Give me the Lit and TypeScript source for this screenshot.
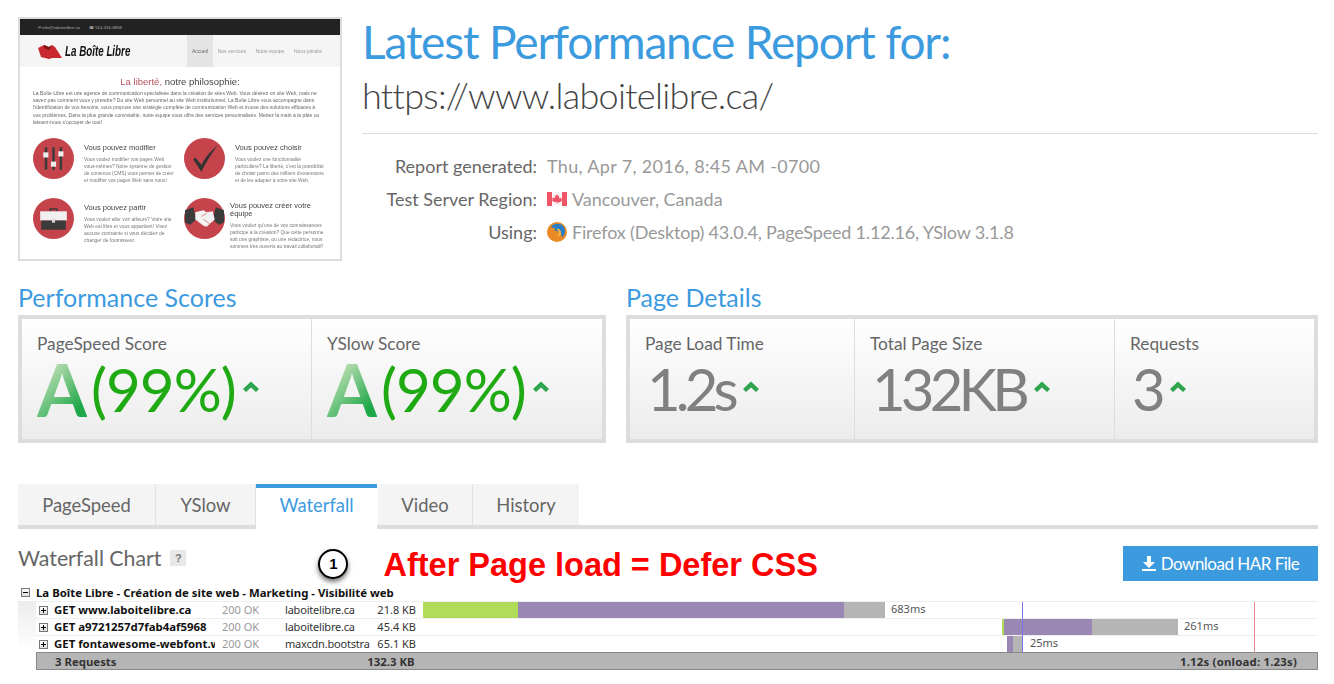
import { LitElement, html, css, svg } from "lit";
import { customElement } from "lit/decorators.js";

const rows = [
  { url: "GET www.laboitelibre.ca", status: "200 OK", host: "laboitelibre.ca", size: "21.8 KB", label: "683ms", labelAt: 468,
    bars: [[0, 95, "#b0dc5a"], [95, 326, "#9a87b3"], [421, 41, "#b5b5b5"]] },
  { url: "GET a9721257d7fab4af5968", status: "200 OK", host: "laboitelibre.ca", size: "45.4 KB", label: "261ms", labelAt: 761,
    bars: [[579, 2, "#b0dc5a"], [581, 88, "#9a87b3"], [669, 86, "#b5b5b5"]] },
  { url: "GET fontawesome-webfont.w", status: "200 OK", host: "maxcdn.bootstra", size: "65.1 KB", label: "25ms", labelAt: 607,
    bars: [[584, 6, "#9a87b3"], [590, 9, "#b5b5b5"]] },
];

const icons = {
  sliders: svg`<svg viewBox="0 0 40 40" class="ci"><circle cx="20" cy="20" r="20" fill="#c5444b"/><g fill="#3b3b3b"><rect x="11.5" y="9" width="2.4" height="22"/><rect x="18.8" y="9" width="2.4" height="22"/><rect x="26" y="9" width="2.4" height="22"/></g><g fill="#eee"><rect x="10" y="14" width="5" height="5"/><rect x="17.5" y="23" width="5" height="5"/><rect x="24.7" y="13" width="5" height="5"/></g></svg>`,
  check: svg`<svg viewBox="0 0 40 40" class="ci"><circle cx="20" cy="20" r="20" fill="#c5444b"/><path d="M9 21l2-2 6 7C21 18 27 12 33 7 27 15 21 24 17 33z" fill="#333"/></svg>`,
  case: svg`<svg viewBox="0 0 40 40" class="ci"><circle cx="20" cy="20" r="20" fill="#c5444b"/><path d="M16 13v-3h8v3h-1.6v-1.5h-4.8V13z" fill="#3b3b3b"/><path d="M7 13h26v9H7z" fill="#f0f0f0"/><path d="M8 22h24v9H8z" fill="#3b3b3b"/><rect x="18.5" y="20" width="3" height="4" fill="#ddd"/></svg>`,
  hands: svg`<svg viewBox="0 0 40 40" class="ci"><circle cx="20" cy="20" r="20" fill="#c5444b"/><path d="M1 12l8-3 3 12-6 5-5-2z M39 12l-8-3-3 12 6 5 5-2z" fill="#3b3b3b"/><path d="M11 14l8-2 3 2 6-1 2 8-8 7-3-1-8-6z" fill="#f2f2f2"/><path d="M17 18l5-3M19 21l6 4" stroke="#c5444b" stroke-width=".6" fill="none"/></svg>`,
};

@customElement("app-root")
export class AppRoot extends LitElement {
  static styles = css`
    :host { display: block; width: 1334px; height: 684px; overflow: hidden; background: #fff; font-family: "Lato", sans-serif; color: #666; }
    * { box-sizing: border-box; }
    .page { padding: 17px 16px 0 18px; }
    .head { display: flex; gap: 20px; height: 244px; }
    .shot { width: 324px; height: 244px; flex: none; border: 2px solid #ddd; overflow: hidden; font-family: "Liberation Sans", sans-serif; color: #555; filter: blur(0.35px); }
    .s-top { height: 16px; background: #222; color: #aaa; font-size: 4.300px; display: flex; align-items: center; gap: 9px; padding-left: 18px; }
    .s-nav { height: 32px; background: #f5f5f5; display: flex; align-items: stretch; padding-left: 18px; color: #999; }
    .s-logo { display: flex; align-items: center; gap: 3px; width: 149px; font: italic 700 14px "Liberation Sans", sans-serif; color: #111; white-space: nowrap; }
    .s-logo svg { width: 24px; height: 15px; flex: none; }
    .s-logo span { display: inline-block; transform: scaleX(.7); transform-origin: left center; }
    .s-item { display: flex; align-items: center; width: 38px; justify-content: center; white-space: nowrap; font-size: 5px; }
    .s-item.on { background: #e4e4e4; color: #666; width: 26px; }
    .s-h { text-align: center; font-size: 9.500px; line-height: 11px; margin-top: 9px; color: #444; }
    .s-h b { font-weight: 400; color: #b5545b; }
    .s-p { font-size: 5.050px; line-height: 7.200px; margin: 3px 17px 0 13px; height: 36px; color: #666; }
    .s-grid { display: grid; grid-template-columns: 151px 150px; grid-auto-rows: 60px; margin: 12px 0 0 13px; }
    .s-card { display: flex; gap: 10px; }
    .ci { width: 41px; height: 41px; flex: none; }
    .s-card h4 { margin: 6px 0 4px; font-size: 7.500px; line-height: 8px; font-weight: 400; color: #444; }
    .s-card p { margin: 0; font-size: 4.900px; line-height: 7px; color: #777; width: 92px; }
    .s-card.tight { gap: 5px; }
    .s-card.tight h4 { margin-top: 4px; width: 90px; }
    .s-card.tight p { width: 96px; }

    .info { flex: 1; min-width: 0; }
    h1 { margin: 0; padding: 1px 0 2px; font-size: 46px; line-height: 48px; font-weight: 400; color: #3c9ade; white-space: nowrap; letter-spacing: -1.150px; }
    .url { margin-top: 7px; font-size: 36px; line-height: 40px; font-weight: 300; color: #444; letter-spacing: -0.7px; padding-bottom: 18px; border-bottom: 1px solid #ddd; }
    .facts { margin-top: 15px; display: grid; grid-template-columns: 175px 1fr; column-gap: 10px; grid-auto-rows: 33px; font-size: 18px; align-items: center; }
    .facts .k { text-align: right; color: #666; }
    .facts .v { color: #999; display: flex; align-items: center; gap: 5px; white-space: nowrap; }
    .v.wide { letter-spacing: 0.33px; }
    .v.tight { letter-spacing: -0.18px; }
    .flag { width: 20px; height: 14px; flex: none; }
    .fox { width: 20px; height: 20px; flex: none; }

    .sections { display: flex; gap: 20px; margin-top: 21px; }
    .sec.left { width: 588px; }
    .sec.right { width: 692px; }
    h3 { margin: 0 0 3px; font-size: 25px; line-height: 30px; font-weight: 400; color: #3c9ade; }
    .panel { display: flex; height: 128px; border: 4px solid #ddd; background: linear-gradient(#fff, #ececec); }
    .cell { padding: 13px 15px 0; border-right: 1px solid #ddd; flex: none; }
    .cell:last-child { border-right: 0; flex: 1; }
    .cell .l { font-size: 17.300px; line-height: 24px; color: #666; }
    .val { display: flex; align-items: center; font-size: 60px; line-height: 68px; margin-top: -1px; font-weight: 400; white-space: nowrap; letter-spacing: -1px; }
    .grade { font-weight: 700; font-size: 72px; background: linear-gradient(135deg, #dbe9c8 10%, #1fa84a 80%); -webkit-background-clip: text; background-clip: text; color: transparent; margin-right: 4px; letter-spacing: 0; }
    .pct { color: #1faa14; }
    .num { color: #808080; font-size: 58px; font-weight: 400; letter-spacing: -4.800px; padding-left: 2px; }
    .num .up { margin-left: 8px; }
    .up { width: 18px; height: 12px; margin: 0 0 4px 6px; flex: none; }

    .tabs { display: flex; margin-top: 41px; height: 45px; border-bottom: 4px solid #ddd; }
    .tab { background: #f4f4f4; border-right: 1px solid #e2e2e2; font-size: 18.400px; display: flex; align-items: center; justify-content: center; color: #666; }
    .tab.on { background: #fff; color: #3c9ade; border-top: 4px solid #3c9ade; border-right: 0; height: 45px; margin-right: 1px; padding-bottom: 7px; }
    .bar { display: flex; align-items: center; height: 35px; margin-top: 17px; }
    h2 { margin: 0 0 11px; font-size: 21.300px; font-weight: 400; color: #666; line-height: 28px; white-space: nowrap; }
    .q { width: 16px; height: 16px; margin: 0 0 11px 9px; background: #e8e8e8; color: #777; font: 700 11px "Liberation Sans", sans-serif; display: flex; align-items: center; justify-content: center; }
    .mark { width: 30px; height: 30px; border-radius: 50%; margin-left: 132px; border: 2px solid #000; background: #fff; color: #000; font: 700 15px "Liberation Sans", sans-serif; display: flex; align-items: center; justify-content: center; box-shadow: 0 3px 5px rgba(0,0,0,.55); }
    .red { margin: 3px 0 0 35px; font: 700 32.500px "Liberation Sans", sans-serif; color: #f00; white-space: nowrap; }
    .dl { margin-left: auto; width: 195px; height: 35px; background: #3c9ade; color: #fff; font-size: 17px; letter-spacing: -0.52px; display: flex; align-items: center; justify-content: center; gap: 5px; white-space: nowrap; }
    .dl svg { width: 14px; height: 15px; flex: none; }

    .wf { font: 400 11px "Noto Sans", sans-serif; color: #333; }
    .grp { height: 17px; margin-top: 3px; display: flex; align-items: center; padding-left: 3px; gap: 6px; font-weight: 700; font-size: 11.400px; color: #111; white-space: nowrap; }
    .box { width: 9px; height: 9px; border: 1px solid #777; background: linear-gradient(#fff, #ddd); position: relative; flex: none; }
    .box::before { content: ""; position: absolute; left: 1px; right: 1px; top: 3px; height: 1px; background: #000; }
    .box.plus::after { content: ""; position: absolute; top: 1px; bottom: 1px; left: 3px; width: 1px; background: #000; }
    .wf-body { display: flex; }
    .fade { width: 18px; height: 50px; background: linear-gradient(#ececec, #fff); flex: none; }
    .wf-main { flex: 1; position: relative; min-width: 0; }
    .row { display: flex; align-items: center; height: 17px; border-top: 1px solid #eee; padding-left: 3px; white-space: nowrap; }
    .row .box { margin-right: 6px; }
    .txt { padding-bottom: 2px; flex: none; overflow: hidden; }
    .u { width: 161px; margin-right: 7px; font-weight: 700; font-size: 11.400px; color: #111; }
    .st { width: 63px; color: #999; }
    .ho { width: 90px; letter-spacing: -0.2px; }
    .sz { width: 41px; text-align: right; }
    .tl { position: relative; height: 16px; margin-left: 7px; flex: 1; }
    .seg { position: absolute; top: 0; bottom: 0; }
    .tt { position: absolute; top: -1px; line-height: 16px; color: #555; }
    .vl { position: absolute; top: 1px; height: 51px; width: 1px; }
    .total { display: flex; align-items: center; height: 18px; background: #b5b5b5; border: 1px solid #888; font-weight: 700; font-size: 11.400px; color: #333; padding: 0 20px 0 18px; }
    .total .c { text-align: right; flex: none; width: 298px; }
    .total .e { margin-left: auto; letter-spacing: 0.2px; }
  `;

  render() {
    const cards = [
      { i: icons.sliders, t: "Vous pouvez modifier", p: "Vous voulez modifier vos pages Web vous-mêmes? Notre système de gestion de contenus (CMS) vous permet de créer et modifier vos pages Web sans nous!" },
      { i: icons.check, t: "Vous pouvez choisir", p: "Vous voulez une fonctionnalité particulière? La liberté, c'est la possibilité de choisir parmi des milliers d'extensions et de les adapter à votre site Web." },
      { i: icons.case, t: "Vous pouvez partir", p: "Vous voulez aller voir ailleurs? Votre site Web est libre et vous appartient! Vivez aucune contrainte si vous décidez de changer de fournisseur." },
      { i: icons.hands, t: "Vous pouvez créer votre équipe", p: "Vous voulez qu'une de vos connaissances participe à la création? Que cette personne soit une graphiste, ou une rédactrice, nous sommes très ouverts au travail collaboratif!", tight: true },
    ];
    const up = html`<svg class="up" viewBox="0 0 18 12"><path d="M9 0.500l8 7.500-3 3-5-4.500-5 4.500-3-3z" fill="#2ea44f"/></svg>`;
    return html`<div class="page">
      <div class="head">
        <div class="shot">
          <div class="s-top"><span>✉ info@laboitelibre.ca</span><span>☎ 514-316-8868</span></div>
          <div class="s-nav">
            <div class="s-logo"><svg viewBox="0 0 24 15"><path d="M0 4l6-3 5 2 3-2 3 2 7 11H14l-3 1-8-2z" fill="#c8282e"/><path d="M6 1l5 2 3-2-3 5-5-2z" fill="#7d1418"/></svg><span>La Boîte Libre</span></div>
            <div class="s-item on">Accueil</div><div class="s-item">Nos services</div><div class="s-item">Notre équipe</div><div class="s-item">Nous joindre</div>
          </div>
          <div class="s-h"><b>La liberté,</b> notre philosophie:</div>
          <div class="s-p">La Boîte Libre est une agence de communication spécialisée dans la création de sites Web. Vous désirez un site Web, mais ne savez pas comment vous y prendre? Du site Web personnel au site Web institutionnel, La Boîte Libre vous accompagne dans l'identification de vos besoins, vous propose une stratégie complète de communication Web et trouve des solutions efficaces à vos problèmes. Dans la plus grande convivialité, notre équipe vous offre des services personnalisés. Mettez la main à la pâte ou laissez-nous s'occuper de tout!</div>
          <div class="s-grid">
            ${cards.map((c) => html`<div class="s-card ${c.tight ? "tight" : ""}">${c.i}<div><h4>${c.t}</h4><p>${c.p}</p></div></div>`)}
          </div>
        </div>
        <div class="info">
          <h1>Latest Performance Report for:</h1>
          <div class="url">https://www.laboitelibre.ca/</div>
          <div class="facts">
            <div class="k">Report generated:</div><div class="v wide">Thu, Apr 7, 2016, 8:45 AM -0700</div>
            <div class="k">Test Server Region:</div><div class="v"><svg class="flag" viewBox="0 0 20 14"><rect width="20" height="14" fill="#f7f7f7"/><rect width="5" height="14" fill="#ee5566"/><rect x="15" width="5" height="14" fill="#ee5566"/><path d="M10 2l1 2 1.300-.5-.5 3 1.500-1 .5 1 1.200-.2-.5 1.700.7.500-2.700 2-2.200-.3V12h-.6v-2l-2.200.3-2.700-2 .7-.5-.5-1.700 1.200.2.500-1 1.500 1-.5-3L9 4z" fill="#ee5566"/></svg>Vancouver, Canada</div>
            <div class="k">Using:</div><div class="v tight"><svg class="fox" viewBox="0 0 20 20"><circle cx="10" cy="10" r="10" fill="#e98a24"/><path d="M4 5a8 8 0 0 1 13 0c2 4 1 8-2 10-1-3-1-6-5-6-2 0-3-1-2-3-2 0-3 0-4-1z" fill="#2a7fc4"/><path d="M9 7c3-1 5 1 5 4s-3 4-5 3c2 0 3-1 3-3s-1-3-3-4z" fill="#f4b642"/></svg>Firefox (Desktop) 43.0.4, PageSpeed 1.12.16, YSlow 3.1.8</div>
          </div>
        </div>
      </div>

      <div class="sections">
        <div class="sec left">
          <h3>Performance Scores</h3>
          <div class="panel">
            <div class="cell" style="width:290px"><div class="l">PageSpeed Score</div><div class="val"><span class="grade">A</span><span class="pct">(99%)</span>${up}</div></div>
            <div class="cell"><div class="l">YSlow Score</div><div class="val"><span class="grade">A</span><span class="pct">(99%)</span>${up}</div></div>
          </div>
        </div>
        <div class="sec right">
          <h3>Page Details</h3>
          <div class="panel">
            <div class="cell" style="width:225px"><div class="l">Page Load Time</div><div class="val num">1.2s${up}</div></div>
            <div class="cell" style="width:260px"><div class="l">Total Page Size</div><div class="val num">132KB${up}</div></div>
            <div class="cell"><div class="l">Requests</div><div class="val num">3${up}</div></div>
          </div>
        </div>
      </div>

      <div class="tabs">
        <div class="tab" style="width:138px">PageSpeed</div>
        <div class="tab" style="width:100px">YSlow</div>
        <div class="tab on" style="width:121px">Waterfall</div>
        <div class="tab" style="width:95px">Video</div>
        <div class="tab" style="width:106px;border-right:0">History</div>
      </div>
      <div class="bar">
        <h2>Waterfall Chart</h2><div class="q">?</div>
        <div class="mark">1</div>
        <div class="red">After Page load = Defer CSS</div>
        <div class="dl"><svg viewBox="0 0 14 15"><path d="M5 0h4v6h4L7 12 1 6h4z M0 13h14v2H0z" fill="#fff"/></svg>Download HAR File</div>
      </div>
      <div class="wf">
        <div class="grp"><span class="box"></span>La Boîte Libre - Création de site web - Marketing - Visibilité web</div>
        <div class="wf-body">
          <div class="fade"></div>
          <div class="wf-main">
            ${rows.map((r) => html`<div class="row"><span class="box plus"></span><div class="txt u">${r.url}</div><div class="txt st">${r.status}</div><div class="txt ho">${r.host}</div><div class="txt sz">${r.size}</div>
              <div class="tl">${r.bars.map((b) => html`<div class="seg" style="left:${b[0]}px;width:${b[1]}px;background:${b[2]}"></div>`)}<span class="tt" style="left:${r.labelAt}px">${r.label}</span></div></div>`)}
            <div class="vl" style="left:986px;background:#7a78e8"></div>
            <div class="vl" style="left:1218px;background:#e88a8a"></div>
            <div class="total"><span>3 Requests</span><span class="c">132.3 KB</span><span class="e">1.12s (onload: 1.23s)</span></div>
          </div>
        </div>
      </div>
    </div>`;
  }
}
